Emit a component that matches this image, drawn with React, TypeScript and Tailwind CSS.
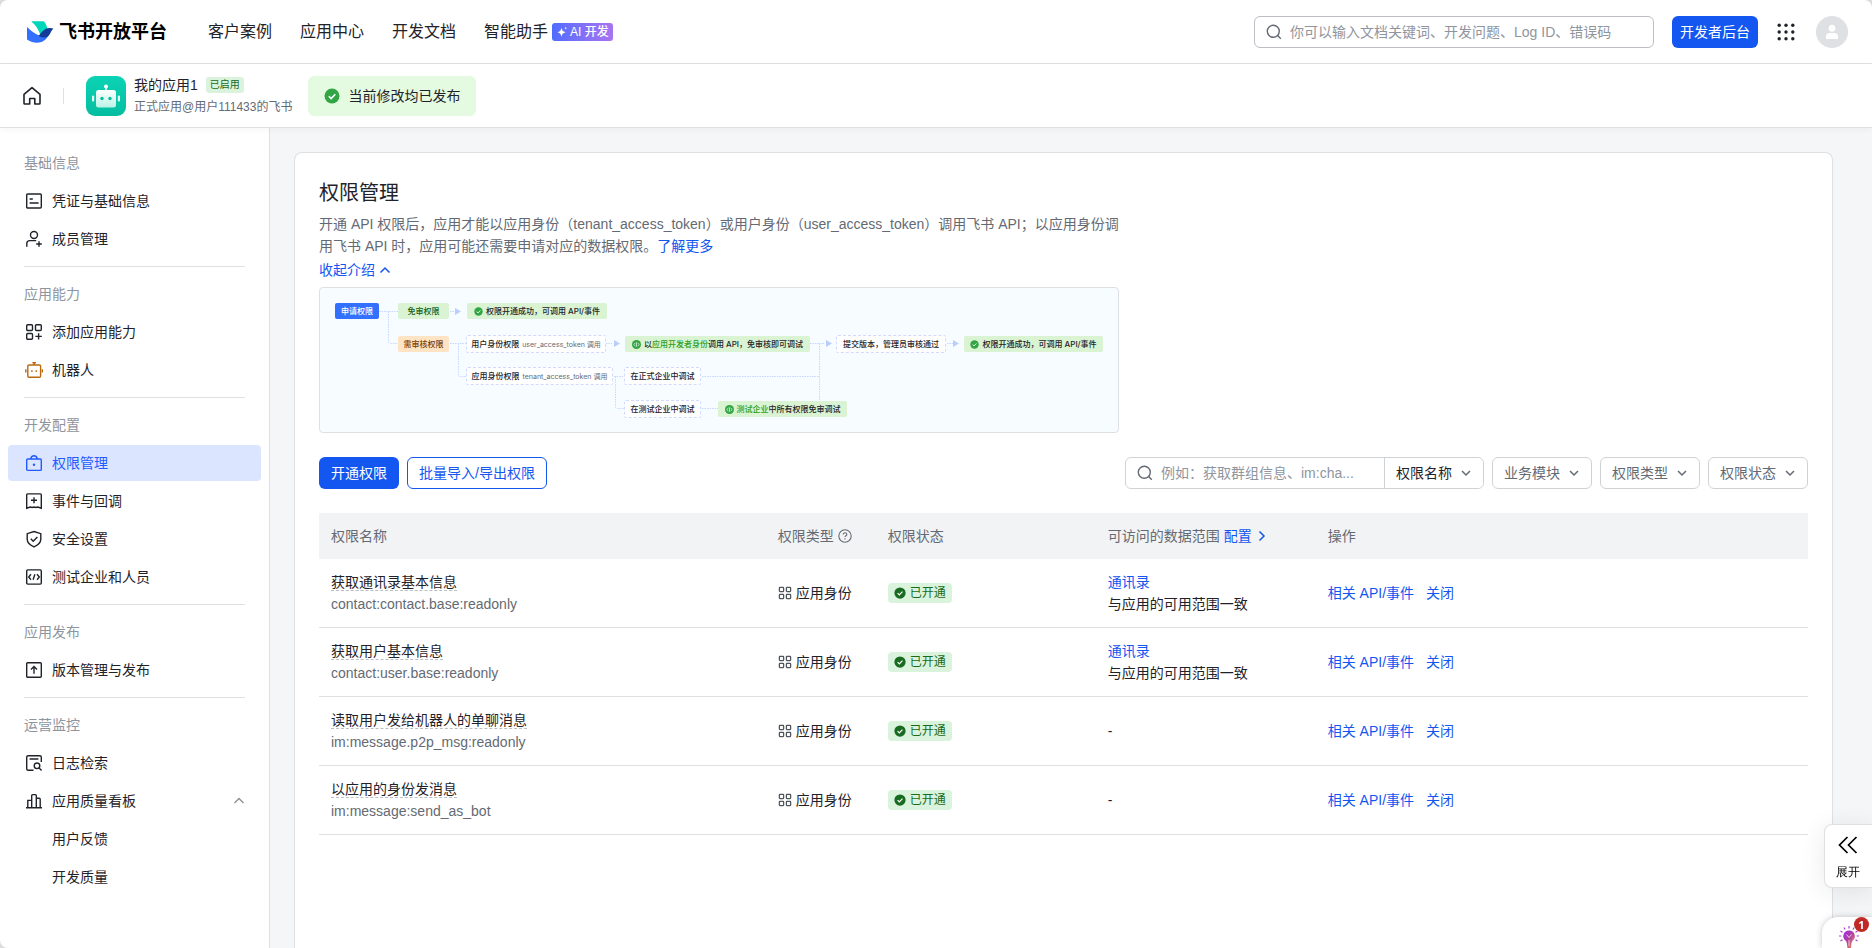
import type { ReactNode } from "react"

const NAV = ["客户案例", "应用中心", "开发文档"]

type IconName =
  | "credential"
  | "member"
  | "add"
  | "bot"
  | "lock"
  | "event"
  | "shield"
  | "code"
  | "publish"
  | "log"
  | "chart"

interface MenuItem {
  label: string
  icon?: IconName
  active?: boolean
  open?: boolean
}

const MENU: { title: string; items: MenuItem[] }[] = [
  {
    title: "基础信息",
    items: [
      { label: "凭证与基础信息", icon: "credential" },
      { label: "成员管理", icon: "member" },
    ],
  },
  {
    title: "应用能力",
    items: [
      { label: "添加应用能力", icon: "add" },
      { label: "机器人", icon: "bot" },
    ],
  },
  {
    title: "开发配置",
    items: [
      { label: "权限管理", icon: "lock", active: true },
      { label: "事件与回调", icon: "event" },
      { label: "安全设置", icon: "shield" },
      { label: "测试企业和人员", icon: "code" },
    ],
  },
  {
    title: "应用发布",
    items: [{ label: "版本管理与发布", icon: "publish" }],
  },
  {
    title: "运营监控",
    items: [
      { label: "日志检索", icon: "log" },
      { label: "应用质量看板", icon: "chart", open: true },
      { label: "用户反馈" },
      { label: "开发质量" },
    ],
  },
]

const SCOPES = [
  { name: "获取通讯录基本信息", key: "contact:contact.base:readonly", range: true },
  { name: "获取用户基本信息", key: "contact:user.base:readonly", range: true },
  { name: "读取用户发给机器人的单聊消息", key: "im:message.p2p_msg:readonly", range: false },
  { name: "以应用的身份发消息", key: "im:message:send_as_bot", range: false },
]

const ICONS: Record<IconName, ReactNode> = {
  credential: (
    <>
      <rect x="1.7" y="2" width="14.6" height="14" rx="1" />
      <path d="M4.6 7h3.2M4.6 11h9" />
    </>
  ),
  member: (
    <>
      <circle cx="9" cy="5" r="3.5" />
      <path d="M1.8 16.8v-3.2a3 3 0 0 1 3-3h6.4M14 11.2v5.6M11.2 14h5.6" />
    </>
  ),
  add: (
    <>
      <rect x="1.7" y="1.7" width="5.8" height="5.8" rx="1" />
      <rect x="10.5" y="1.7" width="5.8" height="5.8" rx="1" />
      <rect x="1.7" y="10.5" width="5.8" height="5.8" rx="1" />
      <path d="M13.6 10.2v6.4M10.4 13.4h6.4" />
    </>
  ),
  bot: (
    <>
      <rect x="2.8" y="4" width="12.8" height="12.2" rx="1.2" />
      <path d="M9.2 4V1.2M7.4 1.8h3.6M.8 8.2v3.2M17.4 8.2v3.2M6.9 9.2v1.8M11.2 9.2v1.8" />
    </>
  ),
  lock: (
    <>
      <rect x="1.7" y="5" width="14.6" height="11.4" rx="1" />
      <path d="M5.6 5c.4-2 1.600-3.300 3.400-3.300s3 1.300 3.400 3.300" />
      <circle cx="9" cy="10.700" r="1.200" fill="currentColor" stroke="none" />
    </>
  ),
  event: (
    <>
      <path d="M2.600 1.900h12.800a.9.9 0 0 1 .9.9v13.400L12.800 15l-2 .5-1.800-.5-1.800.5-2-.5-3.500 1.200V2.800a.9.9 0 0 1 .9-.9z" />
      <path d="M9 5.300v6M6 8.300h6" />
    </>
  ),
  shield: (
    <>
      <path d="M9 1.500l6.800 2.200v5.500c0 3.700-2.900 5.900-6.800 7.700-3.900-1.800-6.800-4-6.800-7.700V3.700z" />
      <path d="M5.800 8.800l2.400 2.400 4.200-4.200" />
    </>
  ),
  code: (
    <>
      <rect x="1.700" y="1.900" width="14.600" height="14.200" rx="1" />
      <path d="M6 6.300L3.700 9 6 11.700M12 6.300L14.300 9 12 11.700M9.900 6.300l-1.800 5.400" />
    </>
  ),
  publish: (
    <>
      <rect x="1.700" y="1.700" width="14.600" height="14.600" rx="1" />
      <path d="M9 12.700V5.600M6 8.400l3-3 3 3" />
    </>
  ),
  log: (
    <>
      <path d="M16.300 8V3.200a1.500 1.500 0 0 0-1.500-1.500H3.200a1.500 1.500 0 0 0-1.500 1.500v11.600a1.500 1.500 0 0 0 1.500 1.500h5.300M4.600 5h8.800" />
      <circle cx="12" cy="11.800" r="2.800" />
      <path d="M14.100 13.900l2.500 2.500" />
    </>
  ),
  chart: (
    <path d="M1 15.700h16M2.800 15.700V8.400h3.900M6.700 15.700V3.600a1 1 0 0 1 1-1h2.600a1 1 0 0 1 1 1v12.100M11.300 6.200h2.900a1 1 0 0 1 1 1v8.500" />
  ),
}

function MenuIcon({ name }: { name: IconName }) {
  return (
    <svg
      viewBox="0 0 18 18"
      className={name === "bot" ? "size-[18px] shrink-0 text-[#b8690e]" : "size-[18px] shrink-0"}
      fill="none"
      stroke="currentColor"
      strokeWidth="1.4"
    >
      {ICONS[name]}
    </svg>
  )
}

function Chevron({ className, d = "M2 4l4 4 4-4" }: { className: string; d?: string }) {
  return (
    <svg viewBox="0 0 12 12" className={className} fill="none" stroke="currentColor" strokeWidth="1.5">
      <path d={d} />
    </svg>
  )
}

function CheckDot({ className }: { className: string }) {
  return (
    <svg viewBox="0 0 16 16" className={className}>
      <circle cx="8" cy="8" r="7.500" fill="currentColor" />
      <path d="M4.800 8.200l2.300 2.300 4.200-4.300" fill="none" stroke="#fff" strokeWidth="1.600" />
    </svg>
  )
}

function CodeDot() {
  return (
    <svg viewBox="0 0 16 16" className="size-[9px] shrink-0 text-[#32a645]">
      <circle cx="8" cy="8" r="8" fill="currentColor" />
      <path d="M5.800 5L3.400 8l2.400 3M10.200 5l2.400 3-2.400 3M8 4v8" fill="none" stroke="#fff" strokeWidth="1.200" />
    </svg>
  )
}

function SearchIcon({ className }: { className: string }) {
  return (
    <svg viewBox="0 0 16 16" className={className} fill="none" stroke="currentColor" strokeWidth="1.400">
      <circle cx="7.300" cy="7.300" r="6" />
      <path d="M11.600 11.600l3.200 3.200" />
    </svg>
  )
}

function Logo() {
  return (
    <a href="#" className="flex items-center gap-[5px]">
      <svg viewBox="0 0 27 22" className="h-[22px] w-[27px]">
        <path d="M5 .3h11.200c.7 0 1 .3 1.300.8 1.600 2.200 2.500 4.500 3 7-2.500.9-4.500 2.700-7.200 5.400C11.300 8.500 8.800 4 4.800.900c-.3-.3-.2-.6.2-.6z" fill="#00d6b9" />
        <path d="M0 6.600c0-.4.400-.5.700-.2 3.700 3.700 8 6.800 12.800 8.600 3 1.100 5.500.9 8.200-1-2.700 5.200-6.600 7.700-11.700 7.700-3.700 0-6.800-1-9.300-2.600-.5-.3-.7-.7-.7-1.300z" fill="#3370ff" />
        <path d="M11.500 14.900c2.900-3.300 6-8.300 11.500-7.900 1.300.1 2.600.4 3.500.8-1.700 1.300-2.600 3.200-3.500 5-1.600 3.300-4.800 5.300-11.500 2.100z" fill="#133c9a" />
      </svg>
      <span className="text-[18px] leading-6 font-bold text-black">飞书开放平台</span>
    </a>
  )
}

function Header() {
  return (
    <header className="flex h-16 items-center border-b border-[#dee0e3] pr-6 pl-[27px]">
      <Logo />
      <nav className="ml-[41px] flex items-center gap-7 text-base">
        {NAV.map((n) => (
          <a key={n} href="#">{n}</a>
        ))}
        <a href="#" className="flex items-center gap-1">
          智能助手
          <span className="flex h-[18px] items-center gap-[2px] rounded-[3px] bg-gradient-to-r from-[#4e6bff] to-[#a873f0] px-1 text-xs font-medium text-white">
            <svg viewBox="0 0 12 12" className="size-3" fill="#fff">
              <path d="M5.500 1.500c.5 2.800 1.200 4 4.200 4.700-3 .7-3.700 1.900-4.200 4.700C5 8.100 4.300 6.900 1.300 6.200c3-.7 3.700-1.900 4.200-4.700z" />
              <path d="M9.800.4c.2 1 .5 1.500 1.600 1.700-1.100.2-1.400.7-1.600 1.700-.2-1-.5-1.500-1.600-1.700 1.100-.2 1.400-.7 1.600-1.700z" />
            </svg>
            AI 开发
          </span>
        </a>
      </nav>
      <div className="ml-auto flex items-center">
        <label className="flex h-8 w-[400px] items-center gap-2 rounded-md border border-[#bbbfc4] px-[11px]">
          <SearchIcon className="size-4 shrink-0 text-[#646a73]" />
          <input
            type="text"
            aria-label="搜索"
            placeholder="你可以输入文档关键词、开发问题、Log ID、错误码"
            className="min-w-0 flex-1 text-sm outline-none placeholder:text-[#8f959e]"
          />
        </label>
        <button className="ml-[18px] h-8 rounded-md bg-[#1456f0] px-2 text-sm text-white">开发者后台</button>
        <button aria-label="更多应用" className="ml-[18px]">
          <svg viewBox="0 0 20 20" className="size-5" fill="#1f2329">
            {[3.200, 10, 16.800].map((y) =>
              [3.200, 10, 16.800].map((x) => <circle key={x + "-" + y} cx={x} cy={y} r="1.700" />)
            )}
          </svg>
        </button>
        <button aria-label="账号" className="ml-5 flex size-8 items-center justify-center rounded-full bg-[#dee0e3]">
          <svg viewBox="0 0 14 16" className="h-4 w-[14px]" fill="#fff">
            <circle cx="7" cy="4.200" r="3.400" />
            <path d="M1 15v-2.300A3.700 3.700 0 0 1 4.700 9h4.600a3.700 3.700 0 0 1 3.700 3.700V15z" />
          </svg>
        </button>
      </div>
    </header>
  )
}

function AppBar() {
  return (
    <div className="relative flex h-16 items-center border-b border-[#dee0e3] px-[22px] shadow-[0_2px_6px_rgba(31,35,41,0.04)]">
      <a href="#" aria-label="首页" className="text-[#1f2329]">
        <svg viewBox="0 0 20 20" className="size-5" fill="none" stroke="currentColor" strokeWidth="1.600" strokeLinejoin="round">
          <path d="M2 8.300L10 1.600l8 6.700V17.200a.8.8 0 0 1-.8.8h-4.400v-5.500H7.700V18H2.800a.8.8 0 0 1-.8-.8z" />
        </svg>
      </a>
      <span className="ml-[21px] h-4 w-px bg-[#dee0e3]" />
      <svg viewBox="0 0 40 40" className="ml-[22px] size-10">
        <defs>
          <linearGradient id="app-bg" x1="0" y1="0" x2="0" y2="1">
            <stop offset="0" stopColor="#0bd3b5" />
            <stop offset="1" stopColor="#05bd9f" />
          </linearGradient>
          <linearGradient id="app-face" x1="0" y1="0" x2="0" y2="1">
            <stop offset="0" stopColor="#fff" />
            <stop offset="1" stopColor="#b9f3e6" />
          </linearGradient>
        </defs>
        <rect width="40" height="40" rx="9" fill="url(#app-bg)" />
        <circle cx="20" cy="10.500" r="2" fill="#fff" />
        <path d="M20 11v4" stroke="#fff" strokeWidth="1.400" />
        <rect x="10" y="14" width="20" height="17.500" rx="2.500" fill="url(#app-face)" />
        <rect x="6" y="19.500" width="2.200" height="6" rx="1.100" fill="#e6fbf6" />
        <rect x="31.800" y="19.500" width="2.200" height="6" rx="1.100" fill="#e6fbf6" />
        <circle cx="16" cy="22.500" r="1.700" fill="#05bd9f" />
        <circle cx="24" cy="22.500" r="1.700" fill="#05bd9f" />
      </svg>
      <div className="ml-2">
        <div className="flex items-center gap-2">
          <span className="text-sm leading-[22px]">我的应用1</span>
          <span className="rounded-[3px] bg-[#d9f3dc] px-1 text-[10px] leading-4 text-[#186b20]">已启用</span>
        </div>
        <p className="text-xs leading-[22px] text-[#646a73]">正式应用@用户111433的飞书</p>
      </div>
      <div className="ml-4 flex h-10 items-center gap-2 rounded-md bg-[#e4fae1] px-4 text-sm">
        <CheckDot className="size-4 text-[#32a645]" />
        当前修改均已发布
      </div>
    </div>
  )
}

function Sidebar() {
  return (
    <aside className="w-[270px] shrink-0 border-r border-[#dee0e3] px-2 pt-[17px] text-sm">
      <nav className="flex flex-col gap-[2px]">
        {MENU.map((group, i) => (
          <div key={group.title} className="flex flex-col gap-[2px]">
            {i > 0 && <hr className="mx-4 my-[7px] border-[#dee0e3]" />}
            <h2 className="flex h-9 items-center px-4 text-[#8f959e]">{group.title}</h2>
            {group.items.map((item) => (
              <a
                key={item.label}
                href="#"
                className={
                  item.active
                    ? "flex h-9 items-center gap-[9px] rounded bg-[#dbe5ff] pr-4 pl-[17px] text-[#245bff]"
                    : "flex h-9 items-center gap-[9px] rounded pr-4 pl-[17px]"
                }
              >
                {item.icon ? <MenuIcon name={item.icon} /> : <span className="w-[18px]" />}
                {item.label}
                {item.open && <Chevron className="ml-auto size-3 text-[#8f959e]" d="M1.500 8l4.500-4.500 4.500 4.500" />}
              </a>
            ))}
          </div>
        ))}
      </nav>
    </aside>
  )
}

const GREEN = "bg-[#d9f3d3]"
const BOX = "border border-dashed border-[#d0daff] bg-white"

function Node({ className, children }: { className: string; children: ReactNode }) {
  return (
    <div className={"absolute flex items-center justify-center gap-[3px] rounded-[2px] whitespace-nowrap " + className}>
      {children}
    </div>
  )
}

function Success() {
  return (
    <>
      <CheckDot className="size-[9px] shrink-0 text-[#32a645]" />
      权限开通成功，可调用 API/事件
    </>
  )
}

function FlowChart() {
  return (
    <div className="relative mt-[6px] h-[146px] w-[800px] max-w-full overflow-hidden rounded border border-[#dee0e3] bg-[#f6fcff] font-['Inter','Noto_Sans_CJK_SC',sans-serif] text-[8px] leading-none font-medium">
      <svg viewBox="0 0 798 144" className="absolute inset-0 h-[144px] w-[798px]" fill="none" stroke="#c9d6ff" strokeDasharray="1.500 1">
        <path d="M59 23.500h19M68.500 23.500v30q0 2 2 2h8M130 23.500h5M130 55.500h17M138.500 55.500v31q0 2 2 2h7M286 55.500h6M294 88.500h11M295.500 88.500v30q0 2 2 2h7M382 88.500h117M382 120.500h17M490 55.500h15M499.500 55.500v58M627 55.500h6" />
        <g fill="#bacefd" stroke="none">
          <path d="M135 20l6 3.500-6 3.500zM294 52l6 3.500-6 3.500zM506 52l6 3.500-6 3.500zM633 52l6 3.500-6 3.500z" />
        </g>
      </svg>
      <Node className="top-[15px] left-[15px] h-4 w-11 bg-[#3370ff] text-white">申请权限</Node>
      <Node className={"top-[15px] left-[78px] h-4 w-[51px] text-[#186010] " + GREEN}>免审权限</Node>
      <Node className={"top-[15px] left-[147px] h-4 w-[140px] " + GREEN}><Success /></Node>
      <Node className="top-12 left-[78px] h-4 w-[51px] bg-[#fee3c4] text-[#7a3e05]">需审核权限</Node>
      <Node className={"top-[47px] left-[146px] h-[18px] w-[140px] " + BOX}>
        用户身份权限 <span className="text-[7px] font-normal text-[#646a73]">user_access_token 调用</span>
      </Node>
      <Node className={"top-12 left-[305px] h-4 w-[185px] " + GREEN}>
        <CodeDot />
        <span>以<span className="text-[#2ea121]">应用开发者身份</span>调用 API，免审核即可调试</span>
      </Node>
      <Node className={"top-[47px] left-[516px] h-[18px] w-[110px] " + BOX}>提交版本，管理员审核通过</Node>
      <Node className={"top-12 left-[644px] h-4 w-[139px] " + GREEN}><Success /></Node>
      <Node className={"top-[79px] left-[146px] h-[18px] w-[147px] " + BOX}>
        应用身份权限 <span className="text-[7px] font-normal text-[#646a73]">tenant_access_token 调用</span>
      </Node>
      <Node className={"top-[79px] left-[304px] h-[18px] w-[77px] " + BOX}>在正式企业中调试</Node>
      <Node className={"top-28 left-[304px] h-[18px] w-[77px] " + BOX}>在测试企业中调试</Node>
      <Node className={"top-[113px] left-[398px] h-4 w-[129px] " + GREEN}>
        <CodeDot />
        <span><span className="text-[#2ea121]">测试企业</span>中所有权限免审调试</span>
      </Node>
    </div>
  )
}

function FilterSelect({ label }: { label: string }) {
  return (
    <div className="relative">
      <select aria-label={label} className="h-8 w-[100px] appearance-none rounded-md border border-[#d0d3d6] bg-white px-[11px] text-sm text-[#646a73]">
        <option>{label}</option>
      </select>
      <Chevron className="pointer-events-none absolute top-[10px] right-3 size-3 text-[#646a73]" />
    </div>
  )
}

function Toolbar() {
  return (
    <div className="mt-6 flex items-center gap-2 text-sm">
      <button className="h-8 rounded-md bg-[#1456f0] px-3 text-white">开通权限</button>
      <button className="h-8 rounded-md border border-[#1456f0] px-[11px] text-[#1456f0]">批量导入/导出权限</button>
      <div className="ml-auto flex items-center gap-2">
        <div className="flex h-8 rounded-md border border-[#d0d3d6]">
          <label className="flex w-[258px] items-center gap-2 pr-2 pl-[11px]">
            <SearchIcon className="size-4 shrink-0 text-[#646a73]" />
            <input
              type="text"
              aria-label="搜索权限"
              placeholder="例如：获取群组信息、im:cha..."
              className="min-w-0 flex-1 outline-none placeholder:text-[#8f959e]"
            />
          </label>
          <div className="relative border-l border-[#d0d3d6]">
            <select aria-label="搜索字段" className="h-full w-[98px] appearance-none rounded-md bg-white px-[11px]">
              <option>权限名称</option>
            </select>
            <Chevron className="pointer-events-none absolute top-[9px] right-[11px] size-3 text-[#646a73]" />
          </div>
        </div>
        <FilterSelect label="业务模块" />
        <FilterSelect label="权限类型" />
        <FilterSelect label="权限状态" />
      </div>
    </div>
  )
}

function ScopeTable() {
  return (
    <table className="mt-6 w-full table-fixed border-separate border-spacing-0 text-left text-sm">
      <colgroup>
        <col className="w-[30%]" />
        <col className="w-[110px]" />
        <col className="w-[220px]" />
        <col className="w-[220px]" />
        <col />
      </colgroup>
      <thead className="bg-[#f2f3f5] text-[#646a73]">
        <tr className="h-[46px]">
          <th className="px-3 font-normal">权限名称</th>
          <th className="pl-3 font-normal">
            <span className="flex items-center gap-1">
              权限类型
              <svg viewBox="0 0 14 14" className="size-[14px]" fill="none" stroke="currentColor" strokeWidth="1.100">
                <circle cx="7" cy="7" r="6.200" />
                <path d="M5.200 5.600c0-1.100.8-1.800 1.800-1.800s1.800.7 1.800 1.600c0 1.300-1.800 1.400-1.800 2.700M7 9.300v1.200" />
              </svg>
            </span>
          </th>
          <th className="px-3 font-normal">权限状态</th>
          <th className="px-3 font-normal">
            <span className="flex items-center gap-1">
              可访问的数据范围
              <a href="#" className="flex items-center gap-1 text-[#1456f0]">
                配置
                <Chevron className="size-3" d="M3.500 1.500L8 6l-4.500 4.500" />
              </a>
            </span>
          </th>
          <th className="px-3 font-normal">操作</th>
        </tr>
      </thead>
      <tbody>
        {SCOPES.map((s) => (
          <tr key={s.key} className="h-[69px] [&>td]:border-b [&>td]:border-[#dee0e3]">
            <td className="px-3 leading-[22px]">
              <span className="border-b border-dashed border-[#bbbfc4]">{s.name}</span>
              <div className="text-[#646a73]">{s.key}</div>
            </td>
            <td className="pl-3">
              <span className="flex items-center gap-1">
                <svg viewBox="0 0 14 14" className="size-[14px]" fill="none" stroke="#51565d" strokeWidth="1.300">
                  <rect x="1.400" y="1.400" width="4.200" height="4.200" rx=".5" />
                  <rect x="8.400" y="1.400" width="4.200" height="4.200" rx=".5" />
                  <rect x="1.400" y="8.400" width="4.200" height="4.200" rx=".5" />
                  <rect x="8.400" y="8.400" width="4.200" height="4.200" rx=".5" />
                </svg>
                应用身份
              </span>
            </td>
            <td className="px-3">
              <span className="flex h-5 w-16 items-center gap-1 rounded bg-[#d9f3dc] px-[6px] text-xs text-[#186b20]">
                <CheckDot className="size-3 shrink-0" />
                已开通
              </span>
            </td>
            <td className="px-3 leading-[22px]">
              {s.range ? (
                <>
                  <a href="#" className="text-[#1456f0]">通讯录</a>
                  <div>与应用的可用范围一致</div>
                </>
              ) : (
                "-"
              )}
            </td>
            <td className="px-3">
              <span className="flex gap-3 text-[#1456f0]">
                <a href="#">相关 API/事件</a>
                <a href="#">关闭</a>
              </span>
            </td>
          </tr>
        ))}
      </tbody>
    </table>
  )
}

function FloatingTools() {
  return (
    <>
      <button className="fixed right-0 bottom-[60px] flex h-16 w-12 flex-col items-center justify-center gap-[10px] rounded-l-lg border border-r-0 border-[#dee0e3] bg-white pt-1 pr-[2px] text-xs leading-4 shadow-[0_4px_24px_rgba(31,35,41,0.1)]">
        <svg viewBox="0 0 20 18" className="h-[18px] w-5" fill="none" stroke="currentColor" strokeWidth="1.700">
          <path d="M9.500 1L1.500 9l8 8M18.500 1l-8 8 8 8" />
        </svg>
        展开
      </button>
      <button aria-label="消息" className="fixed right-0 bottom-0 h-[31px] w-[50px] rounded-tl-2xl bg-white pt-[9px] pl-[17px] shadow-[0_0_6px_rgba(31,35,41,0.25)]">
        <svg viewBox="0 0 20 22" className="h-[22px] w-5">
          <defs>
            <linearGradient id="bulb" x1="0" y1="0" x2="1" y2="1">
              <stop offset="0" stopColor="#a326e8" />
              <stop offset=".5" stopColor="#b0439c" />
              <stop offset="1" stopColor="#ff9a4d" />
            </linearGradient>
          </defs>
          <path d="M10 4.500a5.600 5.600 0 0 0-3.500 10c.8.8 1.200 1.500 1.300 2.500L8.500 22h3.500l.5-5c.1-1 .5-1.700 1.200-2.500A5.600 5.600 0 0 0 10 4.500z" fill="url(#bulb)" />
          <path d="M10 14v6M7.500 8.500l2.500 3 2.500-3" stroke="#fff" strokeOpacity=".7" fill="none" />
          <path d="M10 0v2.500M5 1.500l1 2M15 1.500l-1 2M1.500 5l2 1.300M18.500 5l-2 1.300M0 10h2.300M20 10h-2.300M1.500 15l2-1.200M18.500 15l-2-1.200" stroke="#a83fd0" strokeWidth="1.200" />
        </svg>
        <span className="absolute top-0 right-[3px] flex size-[15px] items-center justify-center rounded-full bg-[#c02a26] text-[11px] leading-none font-bold text-white">1</span>
      </button>
    </>
  )
}

export default function App() {
  return (
    <div className="bg-[#dcdcdc]">
      <div className="flex min-h-screen flex-col overflow-hidden rounded-lg bg-white font-['Liberation_Sans','Noto_Sans_CJK_SC',sans-serif] text-[#1f2329]">
        <Header />
        <AppBar />
        <div className="flex flex-1">
          <Sidebar />
          <main className="flex min-w-0 flex-1 flex-col bg-[#f5f6f7] pt-6 pr-[39px] pl-6">
            <section className="flex-1 rounded-t-lg border border-b-0 border-[#dee0e3] bg-white px-6 pt-[25px]">
              <h1 className="text-xl leading-[30px]">权限管理</h1>
              <p className="mt-[5px] max-w-[800px] text-sm leading-[22px] text-[#646a73]">
                开通 API 权限后，应用才能以应用身份（tenant_access_token）或用户身份（user_access_token）调用飞书 API；以应用身份调用飞书 API 时，应用可能还需要申请对应的数据权限。
                <a href="#" className="text-[#1456f0]">了解更多</a>
              </p>
              <button className="mt-[2px] flex items-center gap-1 text-sm leading-[22px] text-[#1456f0]">
                收起介绍
                <Chevron className="size-3" d="M1.500 8.500L6 4l4.500 4.500" />
              </button>
              <FlowChart />
              <Toolbar />
              <ScopeTable />
            </section>
          </main>
        </div>
      </div>
      <FloatingTools />
    </div>
  )
}
